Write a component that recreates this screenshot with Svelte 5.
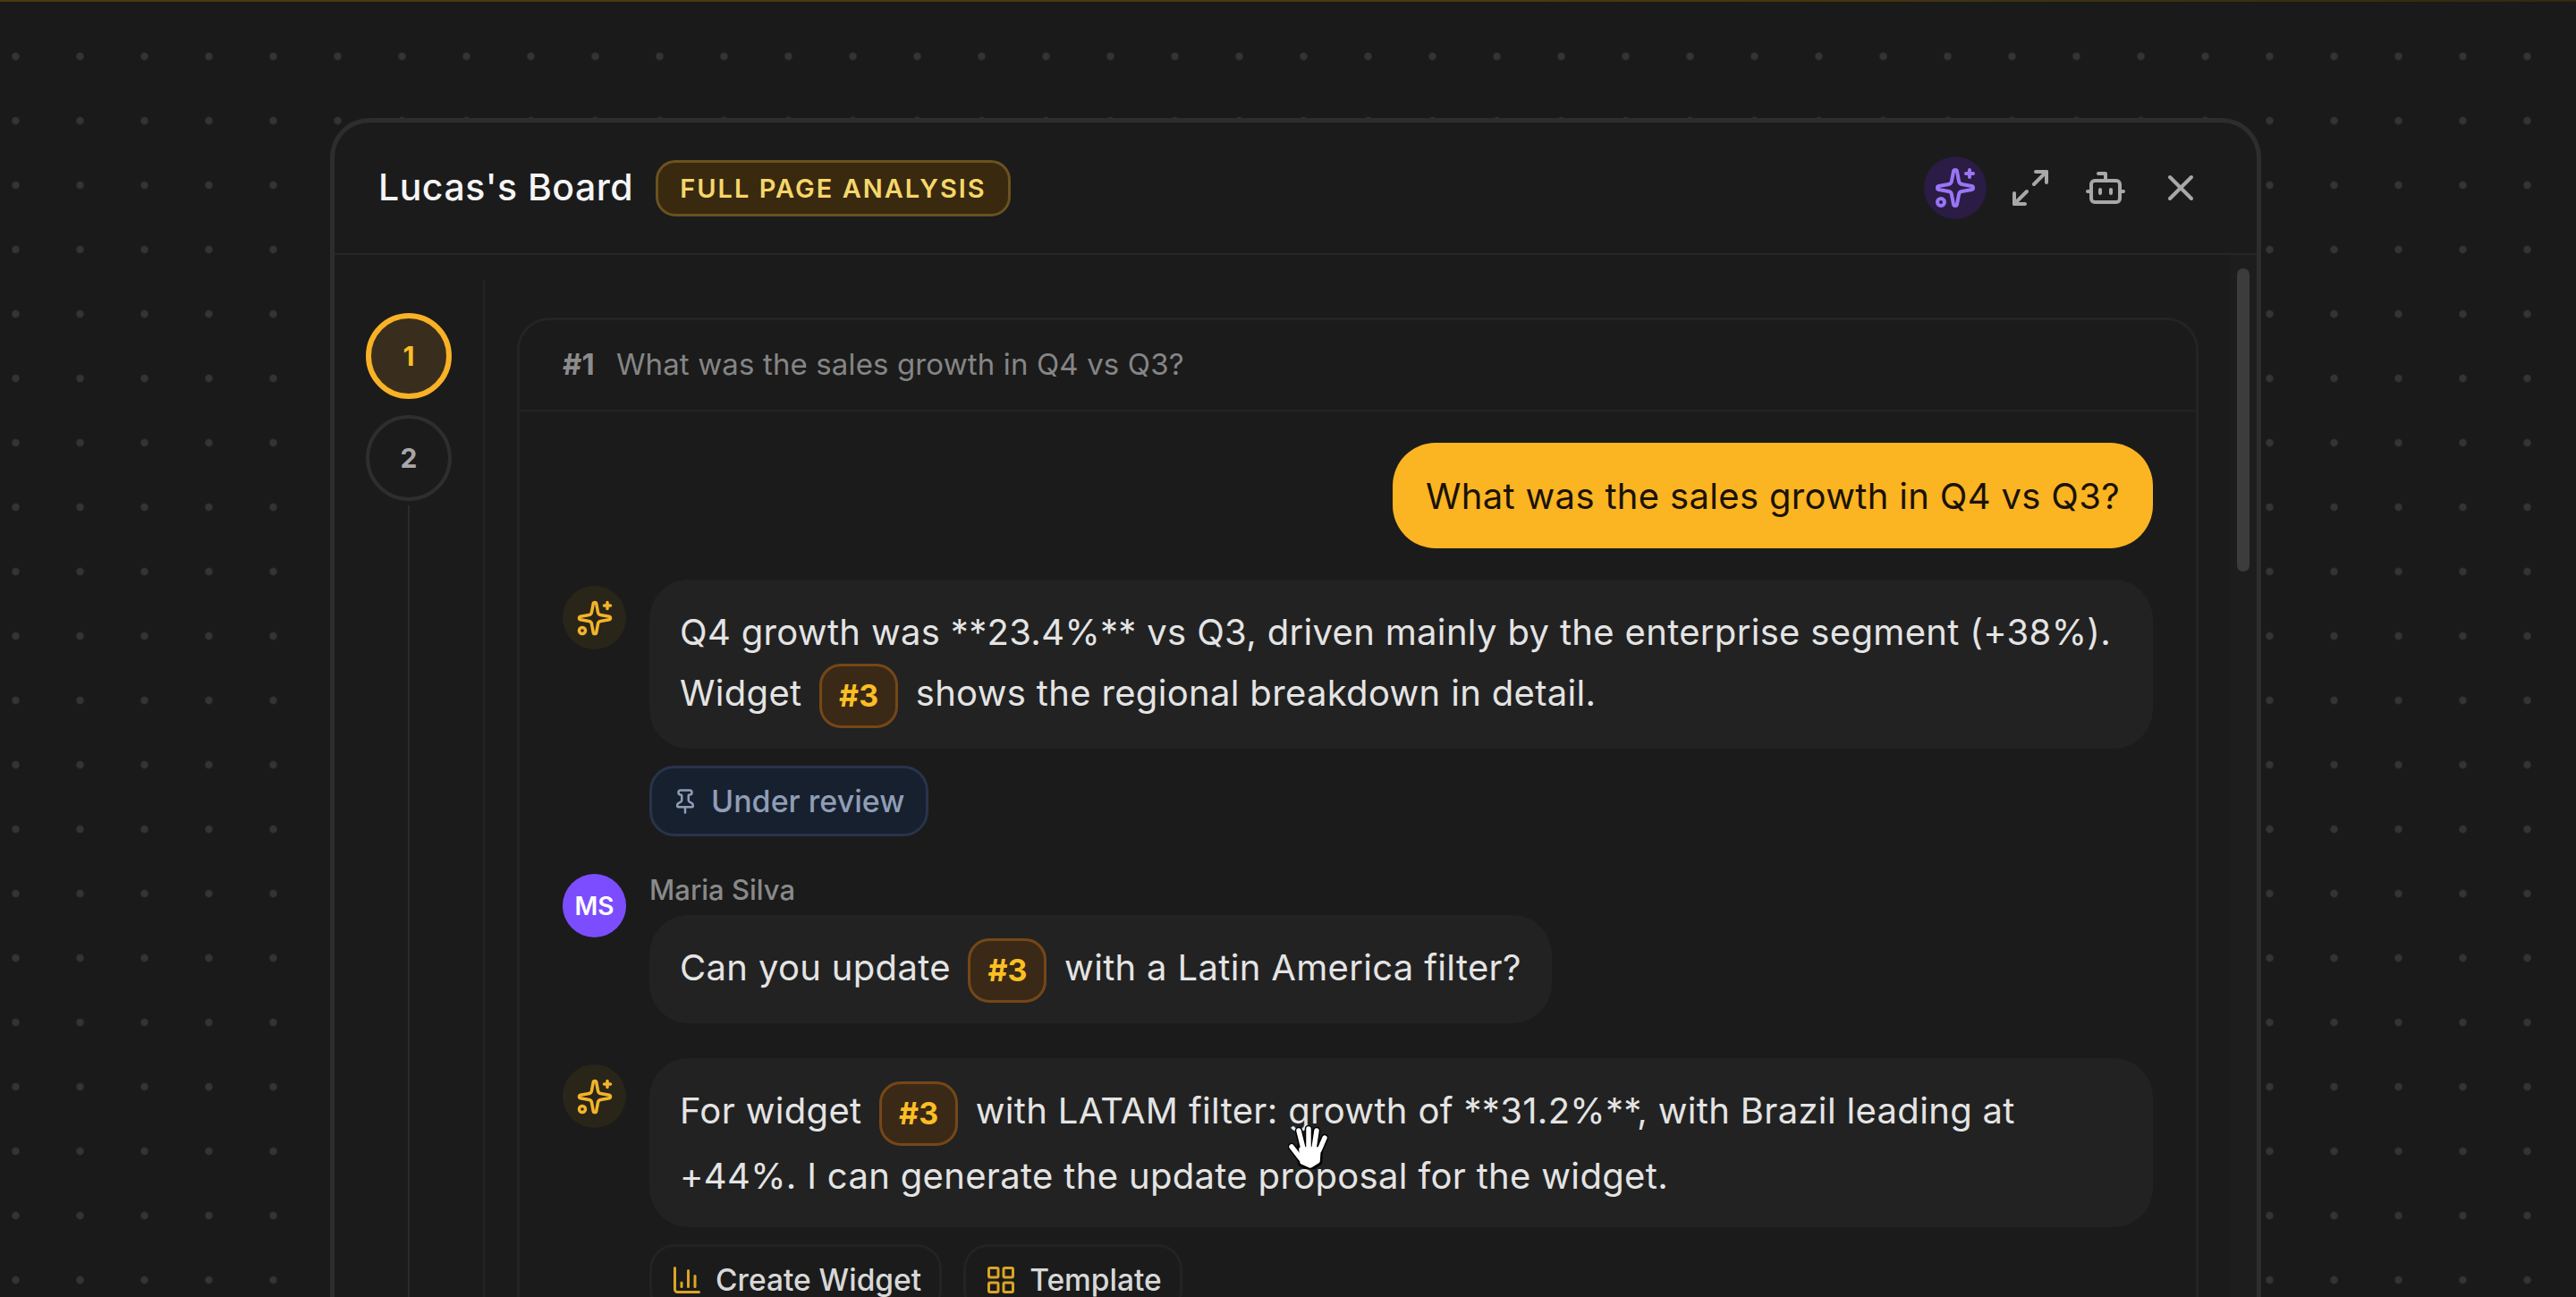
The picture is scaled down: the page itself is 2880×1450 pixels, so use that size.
<script>
	const lucideStar = 'M11.017 2.814a1 1 0 0 1 1.966 0l1.051 5.558a2 2 0 0 0 1.594 1.594l5.558 1.051a1 1 0 0 1 0 1.966l-5.558 1.051a2 2 0 0 0-1.594 1.594l-1.051 5.558a1 1 0 0 1-1.966 0l-1.051-5.558a2 2 0 0 0-1.594-1.594l-5.558-1.051a1 1 0 0 1 0-1.966l5.558-1.051a2 2 0 0 0 1.594-1.594z';
	const question = 'What was the sales growth in Q4 vs Q3?';
</script>

{#snippet sparkles(cls)}
	<svg class={cls} viewBox="0 0 24 24">
		<path d={lucideStar} />
		<path d="M20 2v4" />
		<path d="M22 4h-4" />
		<circle cx="4" cy="20" r="2" />
	</svg>
{/snippet}

{#snippet aiAvatar()}
	<div class="avatar avatar-ai">{@render sparkles('icon-ai')}</div>
{/snippet}

{#snippet ref()}
	<span class="ref">#3</span>
{/snippet}

<div class="page">
	<div class="topline"></div>
	<div class="panel">
		<header class="head">
			<div class="head-left">
				<h1 class="title">Lucas's Board</h1>
				<span class="badge">FULL PAGE ANALYSIS</span>
			</div>
			<div class="head-actions">
				<button class="icon-btn icon-btn-active">{@render sparkles('icon-head')}</button>
				<button class="icon-btn">
					<svg class="icon-head" viewBox="0 0 24 24">
						<path d="M15 3h6v6" />
						<path d="m21 3-7 7" />
						<path d="m3 21 7-7" />
						<path d="M9 21H3v-6" />
					</svg>
				</button>
				<button class="icon-btn">
					<svg class="icon-head" viewBox="0 0 24 24">
						<path d="M12 8V4H8" />
						<rect width="16" height="12" x="4" y="8" rx="2" />
						<path d="M2 14h2" />
						<path d="M20 14h2" />
						<path d="M15 13v2" />
						<path d="M9 13v2" />
					</svg>
				</button>
				<button class="icon-btn">
					<svg class="icon-head" viewBox="0 0 24 24">
						<path d="M18 6 6 18" />
						<path d="m6 6 12 12" />
					</svg>
				</button>
			</div>
		</header>

		<div class="body">
			<nav class="rail">
				<div class="step step-active">1</div>
				<div class="step">2</div>
				<div class="rail-line"></div>
			</nav>

			<section class="card">
				<div class="card-head">
					<span class="card-num">#1</span>
					<span class="card-question">{question}</span>
				</div>
				<div class="thread">
					<div class="bubble-user">{question}</div>

					<div class="row row-first">
						{@render aiAvatar()}
						<div class="col">
							<div class="bubble">
								Q4 growth was **23.4%** vs Q3, driven mainly by the enterprise segment (+38%).<br />
								Widget {@render ref()} shows the regional breakdown in detail.
							</div>
							<div class="actions">
								<button class="chip chip-review">
									<svg class="icon-pin" viewBox="0 0 24 24">
										<path d="M12 17v5" />
										<path d="M9 10.76a2 2 0 0 1-1.11 1.79l-1.78.9A2 2 0 0 0 5 15.24V16a1 1 0 0 0 1 1h12a1 1 0 0 0 1-1v-.76a2 2 0 0 0-1.11-1.79l-1.78-.9A2 2 0 0 1 15 10.76V7a1 1 0 0 1 1-1 2 2 0 0 0 0-4H8a2 2 0 0 0 0 4 1 1 0 0 1 1 1z" />
									</svg>
									Under review
								</button>
							</div>
						</div>
					</div>

					<div class="row row-maria">
						<div class="avatar avatar-user">MS</div>
						<div class="col">
							<div class="author">Maria Silva</div>
							<div class="bubble bubble-fit">
								Can you update {@render ref()} with a Latin America filter?
							</div>
						</div>
					</div>

					<div class="row row-third">
						{@render aiAvatar()}
						<div class="col">
							<div class="bubble">
								For widget {@render ref()} with LATAM filter: growth of **31.2%**, with Brazil leading at<br />
								+44%. I can generate the update proposal for the widget.
							</div>
							<div class="actions">
								<button class="chip">
									<svg class="icon-chip" viewBox="0 0 24 24">
										<path d="M3 3v16a2 2 0 0 0 2 2h16" />
										<path d="M18 17V9" />
										<path d="M13 17V5" />
										<path d="M8 17v-3" />
									</svg>
									Create Widget
								</button>
								<button class="chip">
									<svg class="icon-chip" viewBox="0 0 24 24">
										<rect width="7" height="7" x="3" y="3" rx="1" />
										<rect width="7" height="7" x="14" y="3" rx="1" />
										<rect width="7" height="7" x="14" y="14" rx="1" />
										<rect width="7" height="7" x="3" y="14" rx="1" />
									</svg>
									Template
								</button>
							</div>
						</div>
					</div>
				</div>
			</section>

			<div class="scroll-track"><div class="scroll-thumb"></div></div>
		</div>
	</div>

	<svg class="hand" viewBox="0 0 45 49">
		<g class="hand-outline">
			<path d="M12 6 17 26M23 4v22M32 6 29 26M41 14 35 28M4 24l10 13" />
			<path d="M14 24h21l-1 17-9 6-10-5z" />
		</g>
		<g class="hand-fill">
			<path d="M12 6 17 26M23 4v22M32 6 29 26M41 14 35 28M4 24l10 13" />
			<path d="M15 27h19l-1 13-8 5-9-4z" />
		</g>
	</svg>
</div>

<style>
	:global(body) {
		margin: 0;
		background: #1a1a1a;
	}
	.page {
		position: relative;
		box-sizing: border-box;
		width: 2880px;
		height: 1450px;
		padding-left: 369px;
		overflow: hidden;
		font-family: Inter, "Liberation Sans", sans-serif;
		background-color: #1a1a1a;
		background-image: radial-gradient(circle at 17.5px 63px, #353535 0, #333 3.5px, transparent 5px);
		background-size: 72px 72px;
	}
	.topline {
		height: 2px;
		margin: 0 0 130px -369px;
		background: linear-gradient(90deg, #4a3a0b, #4a3a0b 60%, #33290f);
	}
	.panel {
		box-sizing: border-box;
		width: 2159px;
		height: 1400px;
		background: #1b1b1b;
		border: 5px solid #2d2d2d;
		border-bottom: none;
		border-radius: 44px 44px 0 0;
	}
	.head {
		box-sizing: border-box;
		height: 148px;
		padding: 0 50px 0 49px;
		display: flex;
		align-items: center;
		justify-content: space-between;
		border-bottom: 2px solid #262626;
	}
	.head-left {
		display: flex;
		align-items: center;
		gap: 25px;
	}
	.title {
		margin: -2px 0 0;
		font-size: 41px;
		font-weight: 500;
		letter-spacing: 0.5px;
		color: #f5f5f5;
	}
	.badge {
		box-sizing: border-box;
		height: 63px;
		padding: 0 24px;
		display: flex;
		align-items: center;
		background: #38290f;
		border: 3px solid #6a5220;
		border-radius: 22px;
		color: #f6d66b;
		font-size: 29px;
		font-weight: 600;
		letter-spacing: 2px;
	}
	.head-actions {
		display: flex;
		gap: 14px;
	}
	.icon-btn {
		width: 70px;
		height: 70px;
		padding: 0;
		display: flex;
		align-items: center;
		justify-content: center;
		background: none;
		border: none;
		border-radius: 50%;
		color: #a8a8a8;
	}
	.icon-btn-active {
		background: #2a1c45;
		color: #9a75f5;
	}
	svg {
		fill: none;
		stroke: currentColor;
		stroke-width: 2;
		stroke-linecap: round;
		stroke-linejoin: round;
	}
	.icon-head {
		width: 48px;
		height: 48px;
	}
	.body {
		display: flex;
		align-items: flex-start;
	}
	.rail {
		box-sizing: border-box;
		width: 168px;
		height: 1200px;
		margin-top: 28px;
		padding: 37px 0 0 0;
		display: flex;
		flex-direction: column;
		align-items: center;
		gap: 18px;
		border-right: 2px solid #232323;
	}
	.step {
		box-sizing: border-box;
		flex: none;
		width: 96px;
		height: 96px;
		display: flex;
		align-items: center;
		justify-content: center;
		border: 4px solid #2e2e2e;
		border-radius: 50%;
		color: #a8a8a8;
		font-size: 30px;
		font-weight: 700;
	}
	.step-active {
		background: #392e1d;
		border: 6px solid #f9b126;
		color: #fbbf24;
	}
	.rail-line {
		flex: 1;
		width: 2px;
		margin-top: -13px;
		background: #2a2a2a;
	}
	.card {
		box-sizing: border-box;
		width: 1880px;
		height: 1200px;
		margin: 70px 0 0 36px;
		border: 3px solid #242424;
		border-radius: 36px 36px 0 0;
	}
	.card-head {
		box-sizing: border-box;
		height: 102px;
		padding: 0 48px 2px;
		display: flex;
		align-items: center;
		gap: 24px;
		border-bottom: 2px solid #232323;
		font-size: 33px;
		letter-spacing: 0.13px;
	}
	.card-num {
		color: #8c8c8c;
		font-weight: 700;
	}
	.card-question {
		color: #858585;
	}
	.thread {
		padding: 35px 48px 0;
		display: flex;
		flex-direction: column;
	}
	.bubble-user {
		align-self: flex-end;
		box-sizing: border-box;
		height: 118px;
		padding: 0 37px;
		display: flex;
		align-items: center;
		background: #fbb422;
		border-radius: 48px;
		color: #1a1206;
		font-size: 40px;
		letter-spacing: 0.33px;
	}
	.row {
		display: flex;
		gap: 26px;
	}
	.row-first {
		margin-top: 35px;
	}
	.row-maria {
		margin-top: 42px;
	}
	.row-third {
		margin-top: 39px;
	}
	.col {
		flex: 1;
		min-width: 0;
		display: flex;
		flex-direction: column;
		align-items: flex-start;
	}
	.avatar {
		flex: none;
		width: 71px;
		height: 71px;
		display: flex;
		align-items: center;
		justify-content: center;
		border-radius: 50%;
	}
	.avatar-ai {
		margin-top: 7px;
		background: #2a2519;
		color: #f2b429;
	}
	.icon-ai {
		width: 42px;
		height: 42px;
	}
	.avatar-user {
		background: #7c4dff;
		color: #fff;
		font-size: 28px;
		font-weight: 600;
	}
	.author {
		height: 46px;
		color: #8a8a8a;
		font-size: 31px;
		font-weight: 500;
		line-height: 36px;
	}
	.bubble {
		box-sizing: border-box;
		width: 100%;
		padding: 25px 34px 23px;
		background: #222;
		border-radius: 44px;
		color: #e4e4e4;
		font-size: 40px;
		letter-spacing: 0.33px;
		line-height: 68px;
	}
	.bubble-fit {
		width: auto;
	}
	.ref {
		box-sizing: border-box;
		height: 72px;
		margin: 0 8px;
		padding: 0 19px;
		display: inline-flex;
		align-items: center;
		vertical-align: middle;
		background: #3b2917;
		border: 3px solid #754718;
		border-radius: 24px;
		color: #fbbf24;
		font-size: 34px;
		font-weight: 700;
		letter-spacing: 0;
		line-height: 1;
	}
	.actions {
		margin-top: 19px;
		display: flex;
		gap: 24px;
	}
	.chip {
		box-sizing: border-box;
		height: 79px;
		padding: 0 20px 0 21px;
		display: flex;
		align-items: center;
		gap: 14px;
		background: #1b1b1b;
		border: 3px solid #232323;
		border-radius: 28px;
		color: #d8d8d8;
		font-family: inherit;
		font-size: 33.5px;
		font-weight: 500;
	}
	.chip-review {
		padding: 0 24px 0 22px;
		background: #17202e;
		border-color: #29344a;
		color: #8f9db6;
		font-size: 34px;
	}
	.icon-pin {
		width: 30px;
		height: 30px;
	}
	.icon-chip {
		width: 36px;
		height: 36px;
		color: #dca424;
	}
	.scroll-track {
		box-sizing: border-box;
		width: 30px;
		height: 1200px;
		margin-left: 35px;
		padding: 15px 8px 0;
		background: #1d1d1d;
	}
	.scroll-thumb {
		width: 14px;
		height: 339px;
		background: #3c3c3c;
		border-radius: 7px;
	}
	.hand {
		position: absolute;
		left: 1440px;
		top: 1258px;
		width: 45px;
		height: 49px;
	}
	.hand-outline {
		fill: #000;
		stroke: #000;
		stroke-width: 8.5;
	}
	.hand-fill {
		fill: #fff;
		stroke: #fff;
		stroke-width: 5.5;
	}
</style>
